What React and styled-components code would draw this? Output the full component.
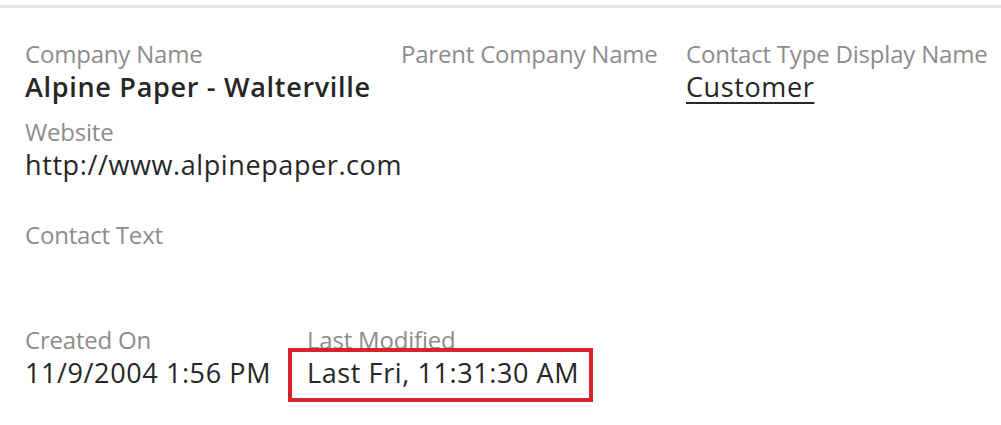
import styled, { createGlobalStyle } from "styled-components";

const GlobalStyle = createGlobalStyle`
  html, body {
    margin: 0;
    padding: 0;
    background: #fff;
  }
  body {
    font-family: "Open Sans", "Noto Sans", "Liberation Sans", sans-serif;
  }
`;

const Page = styled.div`
  width: 1001px;
  height: 425px;
  overflow: hidden;
  padding-top: 5px;
  box-sizing: border-box;
`;

const Divider = styled.div`
  height: 3px;
  background: #e2e2e2;
`;

const Form = styled.div`
  padding: 0 0 0 25px;
`;

const Row = styled.div`
  display: grid;
  grid-template-columns: ${(p) => p.$cols || "1fr"};
  margin-top: ${(p) => p.$top || 0}px;
`;

const Field = styled.div`
  display: flex;
  flex-direction: column;
  min-width: 0;
`;

const Label = styled.div`
  font-size: 24px;
  line-height: 30px;
  color: #8c8c8c;
  white-space: nowrap;
  letter-spacing: -0.2px;
`;

const Value = styled.div`
  position: relative;
  font-size: 27px;
  line-height: 36px;
  min-height: ${(p) => p.$minHeight || 36}px;
  color: #262626;
  white-space: nowrap;
  font-weight: ${(p) => (p.$bold ? 600 : 400)};
  letter-spacing: ${(p) => (p.$bold ? 0.7 : 0.6)}px;
  text-decoration: ${(p) => (p.$link ? "underline" : "none")};
  text-underline-offset: 5px;
  text-decoration-thickness: 2px;
  align-self: flex-start;

  ${(p) =>
    p.$highlight &&
    `
    &::after {
      content: "";
      position: absolute;
      left: -19px;
      right: -14px;
      top: -7px;
      bottom: -11px;
      border: 4px solid #d8222c;
      pointer-events: none;
    }
  `}
`;

export default function App() {
  return (
    <>
      <GlobalStyle />
      <Page>
        <Divider />
        <Form>
          <Row $cols="376px 285px auto" $top={31}>
            <Field>
              <Label>Company Name</Label>
              <Value $bold>Alpine Paper - Walterville</Value>
            </Field>
            <Field>
              <Label>Parent Company Name</Label>
              <Value />
            </Field>
            <Field>
              <Label>Contact Type Display Name</Label>
              <Value $link>Customer</Value>
            </Field>
          </Row>
          <Row $top={12}>
            <Field>
              <Label>Website</Label>
              <Value>http://www.alpinepaper.com</Value>
            </Field>
          </Row>
          <Row $top={37}>
            <Field>
              <Label>Contact Text</Label>
              <Value $minHeight={75} />
            </Field>
          </Row>
          <Row $cols="282px auto">
            <Field>
              <Label>Created On</Label>
              <Value>11/9/2004 1:56 PM</Value>
            </Field>
            <Field>
              <Label>Last Modified</Label>
              <Value $highlight>Last Fri, 11:31:30 AM</Value>
            </Field>
          </Row>
        </Form>
      </Page>
    </>
  );
}
